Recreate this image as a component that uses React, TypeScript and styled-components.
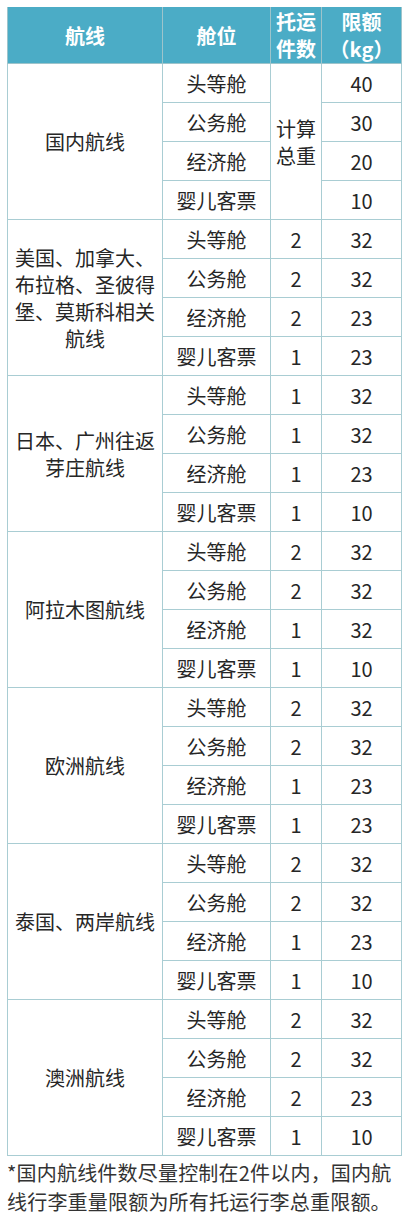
import * as React from 'react';
import styled, {createGlobalStyle} from 'styled-components';

const GlobalStyle = createGlobalStyle`
  html, body {
    margin: 0;
    padding: 0;
    background: #ffffff;
  }
  body {
    font-family: "Noto Sans CJK SC", "Noto Sans", sans-serif;
    color: #262626;
  }
`;

const Page = styled.div`
  width: 407px;
  padding: 7px 6px 0 7px;
  box-sizing: border-box;
`;

const Table = styled.table`
  width: 394px;
  border-collapse: collapse;
  table-layout: fixed;
  font-size: 20px;
  line-height: 27px;
  border-left: 1px solid #8fb6bd;
`;

const HeadCell = styled.th`
  background: #4bacc6;
  color: #ffffff;
  font-weight: bold;
  height: 56px;
  padding: 0 2px;
  text-align: center;
  vertical-align: middle;
  border: 1px solid #9dc4cb;
  border-top: none;
  line-height: 27px;
`;

const Cell = styled.td<{$left?: boolean}>`
  height: 38px;
  padding: 0 ${p => (p.$left ? '7px' : '2px')};
  text-align: center;
  vertical-align: middle;
  border: 1px solid #a9cdd3;
  line-height: 27px;
`;

const Note = styled.p`
  margin: 0;
  padding: 2px 0 0 0;
  font-size: 20px;
  line-height: 29px;
  color: #333333;
  letter-spacing: 0.2px;
`;

type Row = [string, string | null, string];

type Group = {
  route: string[];
  rows: Row[];
  merged?: string[];
};

const cabins = ['头等舱', '公务舱', '经济舱', '婴儿客票'];

const mk = (counts: (string | null)[], limits: string[]): Row[] =>
  cabins.map((c, i) => [c, counts[i], limits[i]] as Row);

const groups: Group[] = [
  {
    route: ['国内航线'],
    rows: mk([null, null, null, null], ['40', '30', '20', '10']),
    merged: ['计算', '总重']
  },
  {
    route: ['美国、加拿大、', '布拉格、圣彼得', '堡、莫斯科相关', '航线'],
    rows: mk(['2', '2', '2', '1'], ['32', '32', '23', '23'])
  },
  {
    route: ['日本、广州往返', '芽庄航线'],
    rows: mk(['1', '1', '1', '1'], ['32', '32', '23', '10'])
  },
  {
    route: ['阿拉木图航线'],
    rows: mk(['2', '2', '1', '1'], ['32', '32', '32', '10'])
  },
  {
    route: ['欧洲航线'],
    rows: mk(['2', '2', '1', '1'], ['32', '32', '23', '23'])
  },
  {
    route: ['泰国、两岸航线'],
    rows: mk(['2', '2', '1', '1'], ['32', '32', '23', '10'])
  },
  {
    route: ['澳洲航线'],
    rows: mk(['2', '2', '2', '1'], ['32', '32', '23', '10'])
  }
];

const lines = (arr: string[]) =>
  arr.map((l, i) => (
    <React.Fragment key={i}>
      {i > 0 && <br />}
      {l}
    </React.Fragment>
  ));

const App: React.FC = () => (
  <Page>
    <GlobalStyle />
    <Table>
      <colgroup>
        <col style={{width: 155}} />
        <col style={{width: 108}} />
        <col style={{width: 51}} />
        <col style={{width: 80}} />
      </colgroup>
      <thead>
        <tr>
          <HeadCell>航线</HeadCell>
          <HeadCell>舱位</HeadCell>
          <HeadCell>托运<br />件数</HeadCell>
          <HeadCell>限额<br />（kg）</HeadCell>
        </tr>
      </thead>
      <tbody>
        {groups.map((g, gi) =>
          g.rows.map((r, ri) => (
            <tr key={`${gi}-${ri}`}>
              {ri === 0 && (
                <Cell $left rowSpan={4}>
                  {lines(g.route)}
                </Cell>
              )}
              <Cell>{r[0]}</Cell>
              {g.merged
                ? ri === 0 && <Cell rowSpan={4}>{lines(g.merged)}</Cell>
                : <Cell>{r[1]}</Cell>}
              <Cell>{r[2]}</Cell>
            </tr>
          ))
        )}
      </tbody>
    </Table>
    <Note>*国内航线件数尽量控制在2件以内，国内航线行李重量限额为所有托运行李总重限额。</Note>
  </Page>
);

export default App;
